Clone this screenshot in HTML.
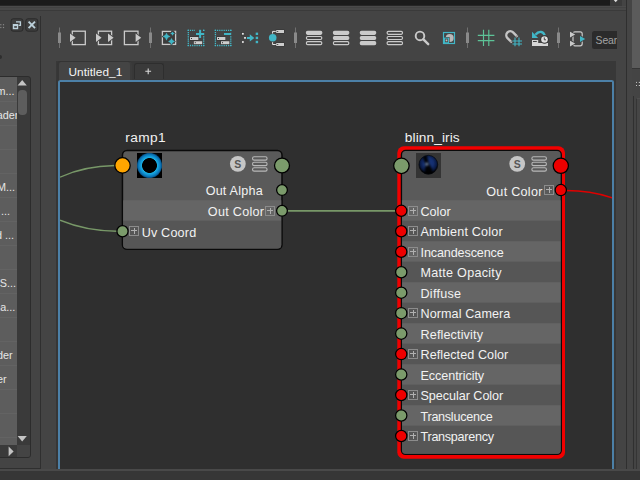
<!DOCTYPE html>
<html><head><meta charset="utf-8"><title>Node Editor</title>
<style>
html,body{margin:0;padding:0;}
body{width:640px;height:480px;overflow:hidden;background:#444;position:relative;font-family:"Liberation Sans",sans-serif;font-size:12.6px;color:#eee;}
.a{position:absolute;}
.t{position:absolute;white-space:nowrap;color:#f2f2f2;font-size:12.6px;line-height:16px;height:16px;}
.tr{text-align:right;}
.port{position:absolute;border-radius:50%;box-sizing:border-box;border:1.7px solid #000;}
.g{background:#7b9b6b;}
.r{background:#e60000;}
.o{background:#ffa500;}
.plus{position:absolute;width:10px;height:10px;box-sizing:border-box;border:1px solid #8c8c8c;}
.plus:before{content:"";position:absolute;left:1px;right:1px;top:3.5px;height:1px;background:#b8b8b8;}
.plus:after{content:"";position:absolute;top:1px;bottom:1px;left:3.5px;width:1px;background:#b8b8b8;}
.lt{position:absolute;white-space:nowrap;color:#e6e6e6;font-size:10.8px;line-height:16px;text-align:right;right:0;}
</style></head><body>
<div class="a" style="left:0px;top:0px;width:610px;height:5px;background:#1b1b1b;"></div>
<div class="a" style="left:0px;top:5px;width:610px;height:1px;background:#262626;"></div>
<div class="a" style="left:610px;top:0px;width:12px;height:6px;background:#3a3a3a;"></div>
<svg class="a" style="left:612px;top:0" width="8" height="4"><polygon points="1.8,0 5.6,0 3.7,2.2" fill="#ddd"/></svg>
<div class="a" style="left:0px;top:6px;width:626px;height:1px;background:#4a4a4a;"></div>
<div class="a" style="left:0px;top:7px;width:626px;height:1px;background:#424242;"></div>
<div class="a" style="left:0px;top:8px;width:626px;height:2px;background:#484848;"></div>
<div class="a" style="left:0px;top:10px;width:626px;height:1px;background:#3a3a3a;"></div>
<div class="a" style="left:616px;top:11px;width:10px;height:458px;background:#444;"></div>
<div class="a" style="left:626px;top:0px;width:1.1px;height:469px;background:#2f2f2f;"></div>
<div class="a" style="left:627.1px;top:0px;width:5.2px;height:469px;background:#454545;"></div>
<div class="a" style="left:632.3px;top:0px;width:8px;height:67.8px;background:#5b5b5b;"></div>
<div class="a" style="left:632.3px;top:67.8px;width:8px;height:1px;background:#353535;"></div>
<div class="a" style="left:632.3px;top:68.8px;width:8px;height:400px;background:#444;"></div>
<svg class="a" style="left:634px;top:80px" width="6" height="8"><rect x="2" y="1.9" width="1" height="1" fill="#c4c4c4"/><rect x="4.8" y="1.9" width="1.2" height="1" fill="#c4c4c4"/><rect x="2" y="5" width="1" height="1" fill="#c4c4c4"/><rect x="4.8" y="5" width="1.2" height="1" fill="#c4c4c4"/></svg>
<div class="a" style="left:633px;top:96px;width:1px;height:373px;background:#303030;"></div>
<div class="a" style="left:636px;top:98px;width:4px;height:371px;background:#464646;border-left:1px solid #353535;border-top:1px solid #4e4e4e;box-sizing:border-box;"></div>
<div class="a" style="left:40px;top:16px;width:1px;height:452px;background:#2f2f2f;"></div>
<div class="a" style="left:0px;top:467.5px;width:41px;height:1px;background:#2f2f2f;"></div>
<svg class="a" style="left:0;top:14px" width="42" height="22" viewBox="0 14 42 22"><rect x="0.2" y="24.1" width="1.2" height="1.2" fill="#888"/><rect x="2.9" y="24.1" width="1.2" height="1.2" fill="#888"/><rect x="0.2" y="26.9" width="1.2" height="1.2" fill="#888"/><rect x="2.9" y="26.9" width="1.2" height="1.2" fill="#888"/><rect x="11" y="18.8" width="12" height="12.4" rx="2.2" fill="#3e3e3e" stroke="#2a2a2a" stroke-width="1"/><rect x="25.8" y="18.8" width="12" height="12.4" rx="2.2" fill="#3e3e3e" stroke="#2a2a2a" stroke-width="1"/><path d="M16,21.9 H20.4 V25.4 H18.6" fill="none" stroke="#bcd0da" stroke-width="1.3"/><rect x="12.8" y="24" width="5.4" height="5.2" fill="#bcd0da"/><rect x="14.2" y="26.2" width="2.7" height="1.5" fill="#333"/><path d="M28.6,21.6 L35,28.2 M35,21.6 L28.6,28.2" stroke="#bcd0da" stroke-width="1.9"/></svg>
<div class="a" style="left:-2px;top:55px;width:4px;height:4px;border-radius:50%;background:#2e2e2e"></div>
<div class="a" style="left:-4px;top:76px;width:34.5px;height:382px;background:#3a3a3a;border:1px solid #2c2c2c;border-radius:3px;box-sizing:border-box;overflow:hidden">
<div class="a" style="left:0;top:0;width:20px;height:368px;background:#5d5d5d"></div>
<div class="a" style="left:0;top:23.5px;width:20px;height:1px;background:#636363"></div>
<div class="a" style="left:0;top:47.5px;width:20px;height:1px;background:#636363"></div>
<div class="a" style="left:0;top:71.5px;width:20px;height:1px;background:#636363"></div>
<div class="a" style="left:0;top:95.5px;width:20px;height:1px;background:#636363"></div>
<div class="a" style="left:0;top:119.5px;width:20px;height:1px;background:#636363"></div>
<div class="a" style="left:0;top:143.5px;width:20px;height:1px;background:#636363"></div>
<div class="a" style="left:0;top:167.5px;width:20px;height:1px;background:#636363"></div>
<div class="a" style="left:0;top:191.5px;width:20px;height:1px;background:#636363"></div>
<div class="a" style="left:0;top:215.5px;width:20px;height:1px;background:#636363"></div>
<div class="a" style="left:0;top:239.5px;width:20px;height:1px;background:#636363"></div>
<div class="a" style="left:0;top:263.5px;width:20px;height:1px;background:#636363"></div>
<div class="a" style="left:0;top:287.5px;width:20px;height:1px;background:#636363"></div>
<div class="a" style="left:0;top:311.5px;width:20px;height:1px;background:#636363"></div>
<div class="a" style="left:0;top:335.5px;width:20px;height:1px;background:#636363"></div>
<div class="a" style="left:0;top:359.5px;width:20px;height:1px;background:#636363"></div>
<div class="a" style="left:-40px;top:6px;width:60px;height:16px;overflow:hidden"><div class="lt" style="right:2.4px">m...</div></div>
<div class="a" style="left:-40px;top:30px;width:60px;height:16px;overflow:hidden"><div class="lt" style="right:-1.3px">ader</div></div>
<div class="a" style="left:-40px;top:102px;width:60px;height:16px;overflow:hidden"><div class="lt" style="right:2px">M...</div></div>
<div class="a" style="left:-40px;top:126px;width:60px;height:16px;overflow:hidden"><div class="lt" style="right:7px">...</div></div>
<div class="a" style="left:-40px;top:150px;width:60px;height:16px;overflow:hidden"><div class="lt" style="right:3px">d ...</div></div>
<div class="a" style="left:-40px;top:198px;width:60px;height:16px;overflow:hidden"><div class="lt" style="right:1px">S...</div></div>
<div class="a" style="left:-40px;top:222px;width:60px;height:16px;overflow:hidden"><div class="lt" style="right:1.7px">na...</div></div>
<div class="a" style="left:-40px;top:270px;width:60px;height:16px;overflow:hidden"><div class="lt" style="right:4.3px">der</div></div>
<div class="a" style="left:-40px;top:294px;width:60px;height:16px;overflow:hidden"><div class="lt" style="right:10.3px">er</div></div>
<div class="a" style="left:0;top:368px;width:20px;height:13px;background:#3a3a3a"></div>
<div class="a" style="left:20px;top:368px;width:13px;height:13px;background:#444"></div>
<svg class="a" style="left:10px;top:369px" width="8" height="11"><polygon points="1.6,0.6 6.6,5.4 1.6,10.2" fill="#c4c4c4"/></svg>
<svg class="a" style="left:20.4px;top:2.4px" width="11" height="8"><polygon points="0.6,6.6 5.2,1 9.8,6.6" fill="#c4c4c4"/></svg>
<div class="a" style="left:21.2px;top:13.4px;width:9.3px;height:24.6px;border-radius:4px;background:#5d5d5d"></div>
<svg class="a" style="left:20.4px;top:357.6px" width="11" height="8"><polygon points="0.6,1 9.8,1 5.2,6.6" fill="#c4c4c4"/></svg>
</div>
<svg class="a" style="left:0;top:0" width="640" height="62" viewBox="0 0 640 62"><rect x="59.0" y="27.5" width="1" height="20.5" fill="#707070"/><rect x="58.0" y="32.5" width="3" height="10.5" fill="#8a8a8a"/>
<rect x="150.0" y="27.5" width="1" height="20.5" fill="#707070"/><rect x="149.0" y="32.5" width="3" height="10.5" fill="#8a8a8a"/>
<rect x="295.0" y="27.5" width="1" height="20.5" fill="#707070"/><rect x="294.0" y="32.5" width="3" height="10.5" fill="#8a8a8a"/>
<rect x="467.0" y="27.5" width="1" height="20.5" fill="#707070"/><rect x="466.0" y="32.5" width="3" height="10.5" fill="#8a8a8a"/>
<rect x="558.0" y="27.5" width="1" height="20.5" fill="#707070"/><rect x="557.0" y="32.5" width="3" height="10.5" fill="#8a8a8a"/>
<rect x="72.3" y="31.2" width="13.0" height="13.400000000000002" fill="none" stroke="#cacaca" stroke-width="1.3"/><polygon points="69,31.999999999999993 77.39999999999999,37.8 69,43.6" fill="#444"/><polygon points="70,33.599999999999994 75.6,37.8 70,42.0" fill="#cacaca"/>
<rect x="98.4" y="31.2" width="13.199999999999989" height="13.400000000000002" fill="none" stroke="#cacaca" stroke-width="1.3"/><polygon points="95,31.999999999999993 103.39999999999999,37.8 95,43.6" fill="#444"/><polygon points="96,33.599999999999994 101.6,37.8 96,42.0" fill="#cacaca"/><polygon points="107,31.999999999999993 115.39999999999999,37.8 107,43.6" fill="#444"/><polygon points="108,33.599999999999994 113.6,37.8 108,42.0" fill="#cacaca"/>
<rect x="124.4" y="31.2" width="13.599999999999994" height="13.400000000000002" fill="none" stroke="#cacaca" stroke-width="1.3"/><polygon points="134.6,31.999999999999993 143.0,37.8 134.6,43.6" fill="#444"/><polygon points="135.6,33.599999999999994 141.2,37.8 135.6,42.0" fill="#cacaca"/>
<rect x="162.4" y="31.4" width="13.2" height="13" fill="#3b3b3b" stroke="#cacaca" stroke-width="1.3"/>
<g stroke="#404040" stroke-width="1.5" stroke-linejoin="round"><path d="M166.5,32.7 Q167.28,35.82 170.4,36.6 Q167.28,37.38 166.5,40.5 Q165.72,37.38 162.6,36.6 Q165.72,35.82 166.5,32.7 Z" fill="#41b6c6"/><path d="M172.5,31.2 Q172.96,33.04 174.8,33.5 Q172.96,33.96 172.5,35.8 Q172.04,33.96 170.2,33.5 Q172.04,33.04 172.5,31.2 Z" fill="#41b6c6"/><path d="M171.5,38.1 Q172.18,40.82 174.9,41.5 Q172.18,42.18 171.5,44.9 Q170.82,42.18 168.1,41.5 Q170.82,40.82 171.5,38.1 Z" fill="#41b6c6"/></g><path d="M166.5,32.7 Q167.28,35.82 170.4,36.6 Q167.28,37.38 166.5,40.5 Q165.72,37.38 162.6,36.6 Q165.72,35.82 166.5,32.7 Z" fill="#41b6c6"/><path d="M172.5,31.2 Q172.96,33.04 174.8,33.5 Q172.96,33.96 172.5,35.8 Q172.04,33.96 170.2,33.5 Q172.04,33.04 172.5,31.2 Z" fill="#41b6c6"/><path d="M171.5,38.1 Q172.18,40.82 174.9,41.5 Q172.18,42.18 171.5,44.9 Q170.82,42.18 168.1,41.5 Q170.82,40.82 171.5,38.1 Z" fill="#41b6c6"/>
<rect x="171.2" y="30.4" width="3.2" height="1.6" fill="#444"/>
<g stroke="#42b8c8" stroke-width="1.3" fill="none"><path d="M187.7,30.42 h16.6" stroke-dasharray="1.2 1.000"/><path d="M187.7,45.480000000000004 h16.6" stroke-dasharray="1.2 1.000"/><path d="M188.32,29.8 v16.3" stroke-dasharray="1.2 0.957"/><path d="M203.67999999999998,29.8 v16.3" stroke-dasharray="1.2 0.957"/></g><rect x="195" y="29" width="8" height="9" fill="#444"/><rect x="198" y="32" width="7" height="4" fill="#444"/><rect x="196" y="33" width="8.2" height="2" fill="#41b6c6"/><rect x="199.1" y="29.8" width="2" height="8.2" fill="#41b6c6"/><rect x="189.6" y="36.6" width="9.200000000000001" height="3.8" fill="#303030"/><rect x="190" y="37" width="8.4" height="3" fill="#cdcdcd"/><rect x="191" y="38" width="1" height="1" fill="#333"/><rect x="193.4" y="40.800000000000004" width="9.200000000000001" height="3.8" fill="#303030"/><rect x="193.8" y="41.2" width="8.4" height="3" fill="#cdcdcd"/><rect x="194.8" y="42.2" width="1" height="1" fill="#333"/>
<g stroke="#42b8c8" stroke-width="1.3" fill="none"><path d="M214.79999999999998,30.42 h16.6" stroke-dasharray="1.2 1.000"/><path d="M214.79999999999998,45.480000000000004 h16.6" stroke-dasharray="1.2 1.000"/><path d="M215.42,29.8 v16.3" stroke-dasharray="1.2 0.957"/><path d="M230.77999999999997,29.8 v16.3" stroke-dasharray="1.2 0.957"/></g><rect x="223" y="32.2" width="9" height="3.6" fill="#444"/><rect x="224" y="33" width="7.2" height="2" fill="#41b6c6"/><rect x="216.6" y="36.6" width="9.200000000000001" height="3.8" fill="#303030"/><rect x="217" y="37" width="8.4" height="3" fill="#cdcdcd"/><rect x="218" y="38" width="1" height="1" fill="#333"/><rect x="220.6" y="40.800000000000004" width="9.200000000000001" height="3.8" fill="#303030"/><rect x="221" y="41.2" width="8.4" height="3" fill="#cdcdcd"/><rect x="222" y="42.2" width="1" height="1" fill="#333"/>
<rect x="241.65" y="32.55" width="2.5" height="2.5" fill="#e4e4e4" stroke="#2e2e2e" stroke-width="0.7"/>
<rect x="243.75" y="36.65" width="2.5" height="2.5" fill="#e4e4e4" stroke="#2e2e2e" stroke-width="0.7"/>
<rect x="241.65" y="40.75" width="2.5" height="2.5" fill="#e4e4e4" stroke="#2e2e2e" stroke-width="0.7"/>
<path d="M247,36.9 h2.8 v-2.7 l4.5,3.7 l-4.5,3.7 v-2.7 h-2.8 Z" fill="#41b6c6"/>
<rect x="255.7" y="32.599999999999994" width="2.4" height="2.4" fill="#41b6c6"/>
<rect x="255.7" y="36.699999999999996" width="2.4" height="2.4" fill="#41b6c6"/>
<rect x="255.7" y="40.8" width="2.4" height="2.4" fill="#41b6c6"/>
<path d="M272.6,33.6 V31.4 H276 M272.6,42.2 V44.5 H276" fill="none" stroke="#e8e8e8" stroke-width="1"/>
<circle cx="272.7" cy="37.8" r="3.8" fill="#41b6c6"/>
<rect x="275.8" y="29.6" width="8.6" height="3.8" fill="#303030"/><rect x="276.2" y="30" width="7.8" height="3" fill="#cdcdcd"/><rect x="277.2" y="31" width="1" height="1" fill="#333"/><rect x="275.8" y="42.6" width="8.6" height="3.8" fill="#303030"/><rect x="276.2" y="43" width="7.8" height="3" fill="#cdcdcd"/><rect x="277.2" y="44" width="1" height="1" fill="#333"/>
<rect x="306.45" y="31.3" width="15.3" height="3" rx="1.2" ry="1.2" fill="#cacaca" stroke="#cacaca" stroke-width="1.2"/><rect x="306.45" y="36.5" width="15.3" height="3" rx="1.2" ry="1.2" fill="none" stroke="#cacaca" stroke-width="1.2"/><rect x="306.45" y="41.599999999999994" width="15.3" height="3" rx="1.2" ry="1.2" fill="none" stroke="#cacaca" stroke-width="1.2"/><rect x="333.45" y="31.3" width="15.3" height="3" rx="1.2" ry="1.2" fill="#cacaca" stroke="#cacaca" stroke-width="1.2"/><rect x="333.45" y="36.5" width="15.3" height="3" rx="1.2" ry="1.2" fill="#cacaca" stroke="#cacaca" stroke-width="1.2"/><rect x="333.45" y="41.599999999999994" width="15.3" height="3" rx="1.2" ry="1.2" fill="none" stroke="#cacaca" stroke-width="1.2"/><rect x="360.35" y="31.3" width="15.3" height="3" rx="1.2" ry="1.2" fill="#cacaca" stroke="#cacaca" stroke-width="1.2"/><rect x="360.35" y="36.5" width="15.3" height="3" rx="1.2" ry="1.2" fill="#cacaca" stroke="#cacaca" stroke-width="1.2"/><rect x="360.35" y="41.599999999999994" width="15.3" height="3" rx="1.2" ry="1.2" fill="#cacaca" stroke="#cacaca" stroke-width="1.2"/><rect x="387.15000000000003" y="31.3" width="15.3" height="3" rx="1.2" ry="1.2" fill="none" stroke="#cacaca" stroke-width="1.2"/><rect x="387.15000000000003" y="36.5" width="15.3" height="3" rx="1.2" ry="1.2" fill="none" stroke="#cacaca" stroke-width="1.2"/><rect x="387.15000000000003" y="41.599999999999994" width="15.3" height="3" rx="1.2" ry="1.2" fill="none" stroke="#cacaca" stroke-width="1.2"/>
<circle cx="420" cy="35.9" r="4.3" fill="none" stroke="#cacaca" stroke-width="1.9"/><path d="M423.4,39.4 L428.2,44.2" stroke="#cacaca" stroke-width="2.4" stroke-linecap="round"/>
<rect x="443.5" y="32.5" width="11" height="11" fill="none" stroke="#41b6c6" stroke-width="1.1"/>
<circle cx="449.7" cy="37.9" r="4" fill="#b8b8b8"/>
<rect x="443" y="37" width="6.6" height="7" fill="#444"/><rect x="444.5" y="38.1" width="4" height="4.6" fill="none" stroke="#41b6c6" stroke-width="1"/><rect x="445.6" y="39.5" width="1.8" height="1.8" fill="#c0c0c0"/><rect x="443.5" y="32.5" width="11" height="11" fill="none" stroke="#41b6c6" stroke-width="1.1"/>
<path d="M483.5,29.8 V46 M488.8,29.8 V46 M477.8,35.3 H494.4 M477.8,40.6 H494.4" stroke="#5dc397" stroke-width="1.15" fill="none"/>
<g transform="translate(510.3,35.3) rotate(-45)"><path d="M-4,6.2 V0 A4,4 0 0 1 4,0 V6.2" fill="none" stroke="#c4c4c4" stroke-width="2.4"/><path d="M-5.2,5 h2.4 M2.8,5 h2.4" stroke="#555" stroke-width="0.7"/></g>
<path d="M515,37.6 V46.2 M519,37.6 V46.2 M512.5,41 H522 M512.5,44 H522" stroke="#444" stroke-width="2.2" fill="none"/>
<path d="M515,37.6 V46.2 M519,37.6 V46.2 M512.5,41 H522 M512.5,44 H522" stroke="#41b6c6" stroke-width="1.1" fill="none"/>
<path d="M532,40 H538.2 V43 H548 V46.1 H532 Z" fill="#d6d6d6"/><rect x="533" y="41" width="3.8" height="0.9" fill="#333"/>
<polygon points="532,31.8 532,38 538.2,38" fill="#41b6c6"/><path d="M535.4,34.8 Q538.2,31.4 541,31.9 Q544,32.6 544.7,35.6" fill="none" stroke="#41b6c6" stroke-width="2.4"/>
<circle cx="544.5" cy="39.5" r="4.3" fill="#303030"/><circle cx="544.5" cy="39.5" r="3.3" fill="#dedede"/><path d="M544.3,37.4 V39.8 H546" stroke="#333" stroke-width="0.9" fill="none"/>
<rect x="573" y="31.8" width="9.2" height="14" rx="2" ry="2" fill="none" stroke="#cacaca" stroke-width="1.2"/>
<polygon points="569,30.1 577.0,34.6 569,39.1" fill="#444"/><polygon points="570,31.700000000000003 575.2,34.6 570,37.5" fill="#cacaca"/><polygon points="569,39.1 577.0,43.6 569,48.1" fill="#444"/><polygon points="570,40.7 575.2,43.6 570,46.5" fill="#cacaca"/><polygon points="579,34.5 587.0,39 579,43.5" fill="#444"/><polygon points="580,36.1 585.2,39 580,41.9" fill="#41b6c6"/></svg>
<div class="a" style="left:592px;top:31px;width:25px;height:18px;background:#2b2b2b;border-radius:2.5px 0 0 2.5px;overflow:hidden"><div class="t" style="left:3.6px;top:2.2px;color:#a4a4a4;font-size:10.4px;letter-spacing:-0.1px">Search...</div></div>
<div class="a" style="left:56px;top:61px;width:560px;height:20px;background:#383838;"></div>
<div class="a" style="left:614.2px;top:80px;width:1.8px;height:389px;background:#373737;"></div>
<div class="a" style="left:57px;top:61px;width:75px;height:19px;background:#444;border:1px solid #343434;border-left:2px solid #363636;border-right:2px solid #3b3b3b;border-bottom:none;border-radius:4px 4px 0 0;box-sizing:border-box;"></div>
<div class="t" style="left:68.4px;top:64px;font-size:11.8px;letter-spacing:0.08px;color:#f4f4f4">Untitled_1</div>
<div class="a" style="left:134px;top:63px;width:30px;height:16px;background:#3a3a3a;border:1px solid #2e2e2e;border-bottom:none;border-radius:3px 3px 0 0;box-sizing:border-box;"></div>
<svg class="a" style="left:144px;top:67px" width="9" height="9"><path d="M4.2,1.4 V7.2 M1.3,4.3 H7.1" stroke="#d8d8d8" stroke-width="1.1"/></svg>
<div class="a" style="left:56px;top:80px;width:2px;height:389px;background:#363636;"></div>
<div class="a" id="ne" style="left:57.8px;top:80px;width:556.4px;height:389px;background:#2f2f2f;border:2.2px solid #4c80a7;border-bottom:none;border-radius:2.5px 2.5px 0 0;box-sizing:border-box;"></div>
<div class="a" style="left:60px;top:82px;width:552px;height:387px;overflow:hidden">
<svg class="a" style="left:0;top:0" width="552" height="387" viewBox="60 82 552 387"><path d="M60,177.2 Q84,166 115,165.5" fill="none" stroke="#789868" stroke-width="1.4"/>
<path d="M60,220.2 Q86,231 117,231.2" fill="none" stroke="#789868" stroke-width="1.4"/>
<path d="M286,210.8 H396" fill="none" stroke="#789868" stroke-width="1.7"/>
<path d="M566,190.5 C584,190.5 598,193 613,198" fill="none" stroke="#e00000" stroke-width="1.4"/>
<rect x="122.45" y="150.5" width="159.55" height="98.85" rx="4.6" fill="#5a5a5a" stroke="#0a0a0a" stroke-width="1.5"/>
<clipPath id="c1"><rect x="123.2" y="151.25" width="158.05" height="97.35" rx="3.85"/></clipPath>
<g clip-path="url(#c1)"><rect x="121.7" y="200.3" width="161.05" height="20.5" fill="#656565"/><rect x="121.7" y="220.8" width="161.05" height="39.2" fill="#565656"/></g>
<circle cx="237.85" cy="163.8" r="7.9" fill="#c6c6c6"/><text x="237.85" y="168.10000000000002" font-family="Liberation Sans, sans-serif" font-weight="bold" font-size="10.5" fill="#575757" text-anchor="middle">S</text><rect x="252.5" y="156.75" width="14.6" height="3.4" rx="1.7" fill="none" stroke="#b8b8b8" stroke-width="1.1"/><rect x="252.5" y="162.25" width="14.6" height="3.4" rx="1.7" fill="none" stroke="#b8b8b8" stroke-width="1.1"/><rect x="252.5" y="167.75" width="14.6" height="3.4" rx="1.7" fill="none" stroke="#b8b8b8" stroke-width="1.1"/>
<rect x="265.5" y="206.5" width="9" height="9" fill="none" stroke="#8c8c8c" stroke-width="1"/><path d="M267,210.5 H273 M270.5,208 V214" stroke="#b0b0b0" stroke-width="1" fill="none"/>
<rect x="129.5" y="226.5" width="9" height="9" fill="none" stroke="#8c8c8c" stroke-width="1"/><path d="M131,230.5 H137 M134.5,228 V234" stroke="#b0b0b0" stroke-width="1" fill="none"/>
<rect x="397.3" y="146.25" width="167.7" height="312.5" rx="6.5" fill="#f20000"/>
<rect x="401.43" y="150.43" width="159.9" height="303.95" rx="4.2" fill="#5a5a5a" stroke="#0a0a0a" stroke-width="1.35"/>
<clipPath id="c2"><rect x="402.1" y="151.1" width="158.55" height="302.6" rx="3.53"/></clipPath>
<g clip-path="url(#c2)"><rect x="400.75" y="200.3" width="161.25" height="20.5" fill="#656565"/><rect x="400.75" y="220.8" width="161.25" height="20.5" fill="#565656"/><rect x="400.75" y="241.3" width="161.25" height="20.5" fill="#656565"/><rect x="400.75" y="261.8" width="161.25" height="20.5" fill="#565656"/><rect x="400.75" y="282.3" width="161.25" height="20.5" fill="#656565"/><rect x="400.75" y="302.8" width="161.25" height="20.5" fill="#565656"/><rect x="400.75" y="323.3" width="161.25" height="20.5" fill="#656565"/><rect x="400.75" y="343.8" width="161.25" height="20.5" fill="#565656"/><rect x="400.75" y="364.3" width="161.25" height="20.5" fill="#656565"/><rect x="400.75" y="384.8" width="161.25" height="20.5" fill="#565656"/><rect x="400.75" y="405.3" width="161.25" height="20.5" fill="#656565"/><rect x="400.75" y="425.8" width="161.25" height="44.2" fill="#565656"/></g>
<circle cx="517.2" cy="163.8" r="7.9" fill="#c6c6c6"/><text x="517.2" y="168.10000000000002" font-family="Liberation Sans, sans-serif" font-weight="bold" font-size="10.5" fill="#575757" text-anchor="middle">S</text><rect x="531.85" y="156.75" width="14.6" height="3.4" rx="1.7" fill="none" stroke="#b8b8b8" stroke-width="1.1"/><rect x="531.85" y="162.25" width="14.6" height="3.4" rx="1.7" fill="none" stroke="#b8b8b8" stroke-width="1.1"/><rect x="531.85" y="167.75" width="14.6" height="3.4" rx="1.7" fill="none" stroke="#b8b8b8" stroke-width="1.1"/>
<rect x="544.5" y="185.5" width="9" height="9" fill="none" stroke="#8c8c8c" stroke-width="1"/><path d="M546,189.5 H552 M549.5,187 V193" stroke="#b0b0b0" stroke-width="1" fill="none"/>
<rect x="408.5" y="206.5" width="9" height="9" fill="none" stroke="#8c8c8c" stroke-width="1"/><path d="M410,210.5 H416 M413.5,208 V214" stroke="#b0b0b0" stroke-width="1" fill="none"/>
<rect x="408.5" y="226.5" width="9" height="9" fill="none" stroke="#8c8c8c" stroke-width="1"/><path d="M410,230.5 H416 M413.5,228 V234" stroke="#b0b0b0" stroke-width="1" fill="none"/>
<rect x="408.5" y="247.5" width="9" height="9" fill="none" stroke="#8c8c8c" stroke-width="1"/><path d="M410,251.5 H416 M413.5,249 V255" stroke="#b0b0b0" stroke-width="1" fill="none"/>
<rect x="408.5" y="308.5" width="9" height="9" fill="none" stroke="#8c8c8c" stroke-width="1"/><path d="M410,312.5 H416 M413.5,310 V316" stroke="#b0b0b0" stroke-width="1" fill="none"/>
<rect x="408.5" y="349.5" width="9" height="9" fill="none" stroke="#8c8c8c" stroke-width="1"/><path d="M410,353.5 H416 M413.5,351 V357" stroke="#b0b0b0" stroke-width="1" fill="none"/>
<rect x="408.5" y="390.5" width="9" height="9" fill="none" stroke="#8c8c8c" stroke-width="1"/><path d="M410,394.5 H416 M413.5,392 V398" stroke="#b0b0b0" stroke-width="1" fill="none"/>
<rect x="408.5" y="431.5" width="9" height="9" fill="none" stroke="#8c8c8c" stroke-width="1"/><path d="M410,435.5 H416 M413.5,433 V439" stroke="#b0b0b0" stroke-width="1" fill="none"/>
<circle cx="122.5" cy="165.4" r="7.68" fill="#ffa500" stroke="#000" stroke-width="1.25"/>
<circle cx="282" cy="165.5" r="7.48" fill="#7b9b6b" stroke="#000" stroke-width="1.25"/>
<circle cx="282" cy="190.1" r="5.38" fill="#7b9b6b" stroke="#000" stroke-width="1.25"/>
<circle cx="282" cy="210.8" r="5.38" fill="#7b9b6b" stroke="#000" stroke-width="1.25"/>
<circle cx="122.5" cy="231.25" r="5.58" fill="#7b9b6b" stroke="#000" stroke-width="1.25"/>
<circle cx="401.4" cy="165.8" r="7.73" fill="#7b9b6b" stroke="#000" stroke-width="1.25"/>
<circle cx="560.8" cy="165.8" r="7.63" fill="#ee0000" stroke="#000" stroke-width="1.25"/>
<circle cx="560.8" cy="190.1" r="5.63" fill="#ee0000" stroke="#000" stroke-width="1.25"/>
<circle cx="401.25" cy="210.8" r="5.63" fill="#ee0000" stroke="#000" stroke-width="1.25"/>
<circle cx="401.25" cy="231.27" r="5.63" fill="#ee0000" stroke="#000" stroke-width="1.25"/>
<circle cx="401.25" cy="251.74" r="5.63" fill="#ee0000" stroke="#000" stroke-width="1.25"/>
<circle cx="401.25" cy="272.21" r="5.63" fill="#7b9b6b" stroke="#000" stroke-width="1.25"/>
<circle cx="401.25" cy="292.68" r="5.63" fill="#7b9b6b" stroke="#000" stroke-width="1.25"/>
<circle cx="401.25" cy="313.15" r="5.63" fill="#7b9b6b" stroke="#000" stroke-width="1.25"/>
<circle cx="401.25" cy="333.62" r="5.63" fill="#7b9b6b" stroke="#000" stroke-width="1.25"/>
<circle cx="401.25" cy="354.09" r="5.63" fill="#ee0000" stroke="#000" stroke-width="1.25"/>
<circle cx="401.25" cy="374.56" r="5.63" fill="#7b9b6b" stroke="#000" stroke-width="1.25"/>
<circle cx="401.25" cy="395.03" r="5.63" fill="#ee0000" stroke="#000" stroke-width="1.25"/>
<circle cx="401.25" cy="415.5" r="5.63" fill="#7b9b6b" stroke="#000" stroke-width="1.25"/>
<circle cx="401.25" cy="435.97" r="5.63" fill="#ee0000" stroke="#000" stroke-width="1.25"/></svg>
<svg class="a" style="left:77px;top:71px" width="25" height="25" viewBox="0 0 25 25"><defs><radialGradient id="rg" cx="50%" cy="50%" r="50%"><stop offset="0.555" stop-color="#000"/><stop offset="0.615" stop-color="#1aaee2"/><stop offset="0.76" stop-color="#0f90d0"/><stop offset="0.91" stop-color="#0a6aaa"/><stop offset="1" stop-color="#053a60"/></radialGradient></defs><rect width="25" height="25" fill="#000"/><circle cx="12.5" cy="12.5" r="12.7" fill="url(#rg)"/></svg>
<svg class="a" style="left:356.2px;top:71.1px" width="25" height="25" viewBox="0 0 24.7 24.7"><defs><radialGradient id="sg" cx="50%" cy="42%" r="54%"><stop offset="0" stop-color="#1a3880"/><stop offset="0.5" stop-color="#142e6e"/><stop offset="0.8" stop-color="#0a1a44"/><stop offset="1" stop-color="#010308"/></radialGradient><filter id="bl" x="-50%" y="-50%" width="200%" height="200%"><feGaussianBlur stdDeviation="1.3"/></filter><filter id="bl2" x="-50%" y="-50%" width="200%" height="200%"><feGaussianBlur stdDeviation="0.9"/></filter><clipPath id="cp"><circle cx="12.2" cy="11.6" r="9.3"/></clipPath></defs><rect width="24.7" height="24.7" fill="#343434"/><circle cx="12.2" cy="11.6" r="9.3" fill="url(#sg)"/><g clip-path="url(#cp)"><path d="M6.2,3 C7.6,6.5 8.6,9.5 9.6,12.4 C8.6,15.5 8,18.5 8.6,22 L16.6,22 C17.2,19 16.4,16.4 15,14.4 C13.2,11.6 11.6,7.5 10.6,1.5 Z" fill="#000" opacity="0.96" filter="url(#bl)"/><circle cx="10.7" cy="10.9" r="1.6" fill="#7a90b4" filter="url(#bl2)"/></g><circle cx="12.2" cy="11.6" r="9.3" fill="none" stroke="#05070c" stroke-width="0.8" opacity="0.8"/></svg>
<div class="t" style="left:65.3px;top:47.599999999999994px;font-size:13.7px;letter-spacing:0.35px">ramp1</div>
<div class="t" style="top:101px;right:349.08px;letter-spacing:0.22px;">Out Alpha</div>
<div class="t" style="top:122px;right:347.72px;letter-spacing:0.28px;">Out Color</div>
<div class="t" style="top:143px;left:81.7px;letter-spacing:0.18px;">Uv Coord</div>
<div class="t" style="left:344.8px;top:47.599999999999994px;font-size:13.7px;letter-spacing:0.1px">blinn_iris</div>
<div class="t" style="top:102px;right:69.32px;letter-spacing:0.28px;">Out Color</div>
<div class="t" style="top:122px;left:360.5px;">Color</div>
<div class="t" style="top:142px;left:360.5px;letter-spacing:0.2px;">Ambient Color</div>
<div class="t" style="top:163px;left:360.5px;letter-spacing:-0.12px;">Incandescence</div>
<div class="t" style="top:183px;left:360.5px;letter-spacing:0.27px;">Matte Opacity</div>
<div class="t" style="top:204px;left:360.5px;letter-spacing:0.25px;">Diffuse</div>
<div class="t" style="top:224px;left:360.5px;letter-spacing:0.08px;">Normal Camera</div>
<div class="t" style="top:245px;left:360.5px;letter-spacing:0.14px;">Reflectivity</div>
<div class="t" style="top:265px;left:360.5px;letter-spacing:0.07px;">Reflected Color</div>
<div class="t" style="top:286px;left:360.5px;letter-spacing:-0.07px;">Eccentricity</div>
<div class="t" style="top:306px;left:360.5px;letter-spacing:-0.04px;">Specular Color</div>
<div class="t" style="top:327px;left:360.5px;letter-spacing:-0.27px;">Translucence</div>
<div class="t" style="top:347px;left:360.5px;letter-spacing:-0.27px;">Transparency</div>
</div>
<div class="a" style="left:0px;top:468.8px;width:640px;height:2.2px;background:#494949;"></div>
<div class="a" style="left:0px;top:471px;width:640px;height:9px;background:#363636;"></div>
</body></html>
